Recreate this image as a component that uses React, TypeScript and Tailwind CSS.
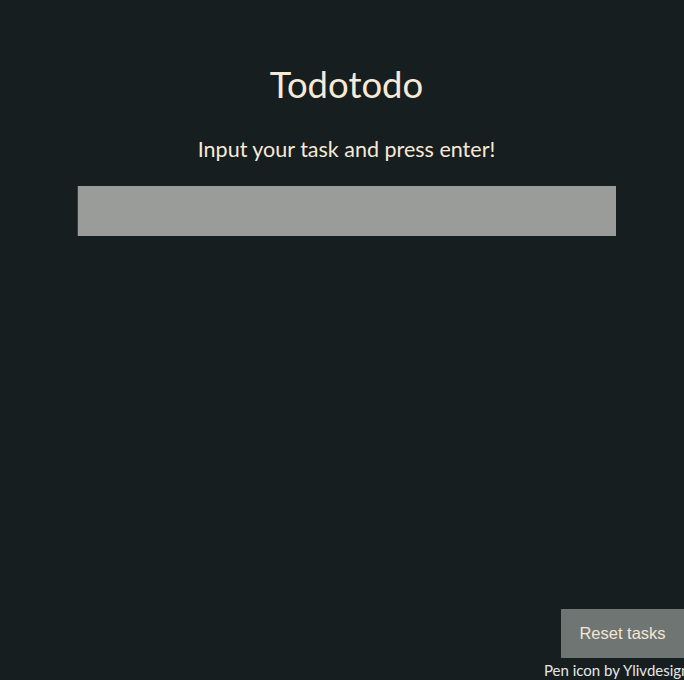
export default function App() {
  return (
    <div className="relative flex h-[680px] w-full flex-col items-center overflow-hidden bg-[#161e20] pl-[9px] font-['Lato',sans-serif] text-[#f7e9d7]">
      <h1 className="mt-[62px] text-[36.5px] leading-[44px]">Todotodo</h1>
      <p className="mt-[30px] text-[21.5px] leading-[26px]">Input your task and press enter!</p>
      <input
        className="mt-[24px] h-[50px] w-[539px] border-l border-[#2c4040] bg-[#9a9c9a] outline-none"
        aria-label="task"
      />
      <button className="absolute right-0 top-[609px] h-[49px] w-[123px] bg-[#6f7572] font-['Liberation_Sans',sans-serif] text-[16.5px] text-[#f3e6d4]">
        Reset tasks
      </button>
      <span className="absolute left-[544px] top-[660px] whitespace-nowrap text-[15px] leading-[20px] text-[#e6e6e6]">
        Pen icon by Ylivdesign
      </span>
    </div>
  )
}
